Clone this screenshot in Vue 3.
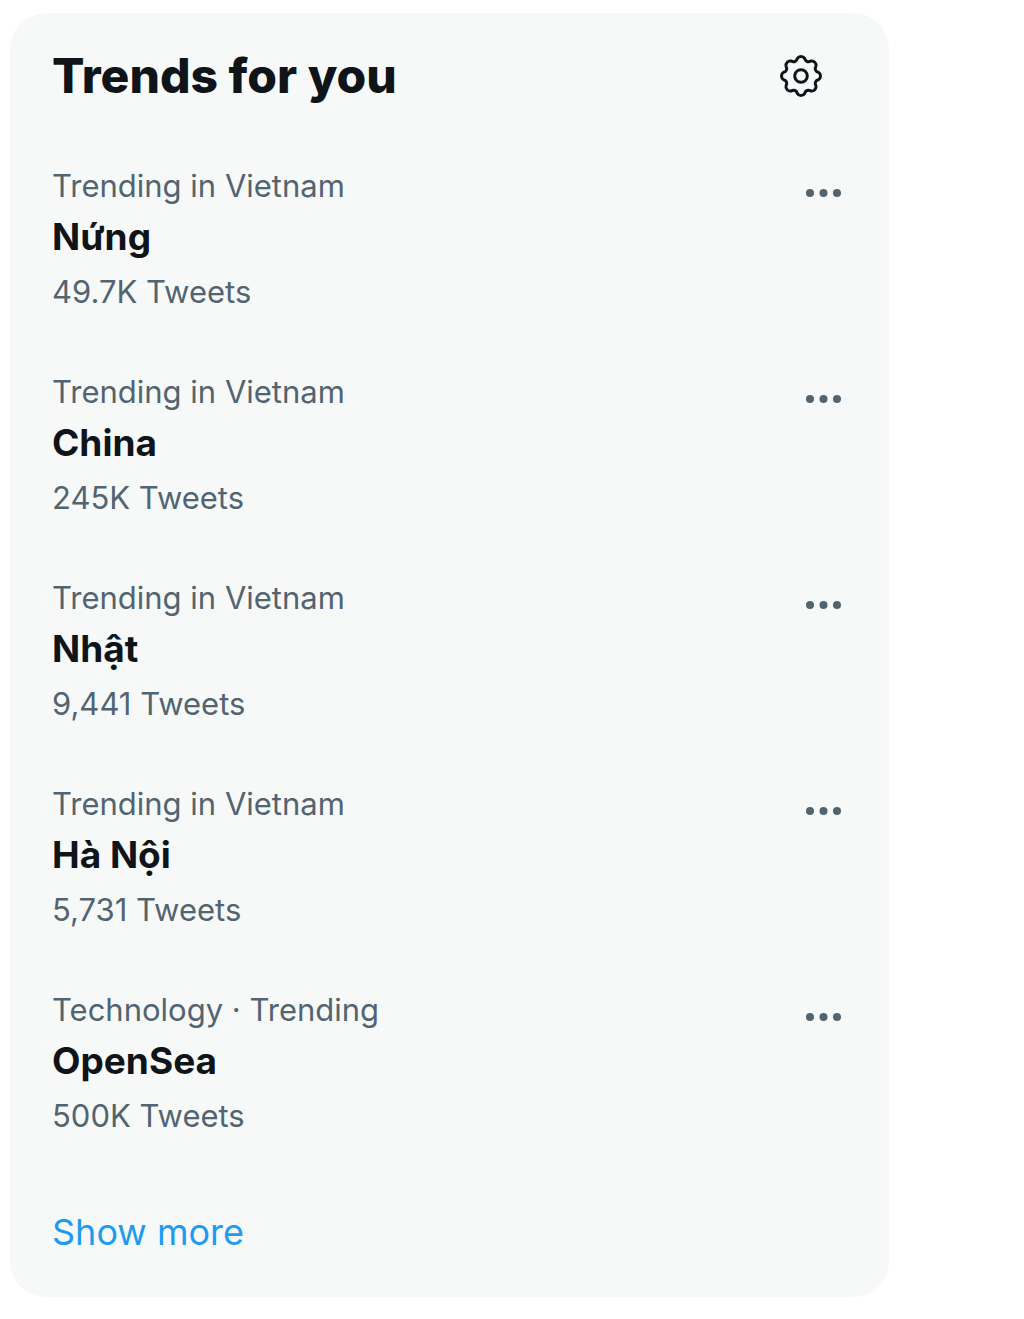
<script setup>
const trends = [
  { context: 'Trending in Vietnam', name: 'Nứng', count: '49.7K Tweets' },
  { context: 'Trending in Vietnam', name: 'China', count: '245K Tweets' },
  { context: 'Trending in Vietnam', name: 'Nhật', count: '9,441 Tweets' },
  { context: 'Trending in Vietnam', name: 'Hà Nội', count: '5,731 Tweets' },
  { context: 'Technology · Trending', name: 'OpenSea', count: '500K Tweets' },
]

// Gear outline: eight rounded teeth joined by rounded valleys
const point = (degrees) => {
  const angle = (degrees * Math.PI) / 180
  return `${(24 + 17.8 * Math.sin(angle)).toFixed(2)} ${(24 - 17.8 * Math.cos(angle)).toFixed(2)}`
}
let gearPath = `M${point(-12)}`
for (let tooth = 0; tooth < 8; tooth++) {
  gearPath += `A4.3 4.3 0 0 1 ${point(tooth * 45 + 12)}A3.8 3.8 0 0 0 ${point(tooth * 45 + 33)}`
}
gearPath += 'Z'
</script>

<template>
  <section class="card" aria-labelledby="trends-title">
    <header class="header">
      <h1 id="trends-title">Trends for you</h1>
      <button class="icon-button" type="button" aria-label="Settings">
        <svg width="48" height="48" viewBox="0 0 48 48" fill="none" stroke="#0f1419" stroke-width="3" stroke-linejoin="round" aria-hidden="true">
          <path :d="gearPath" />
          <circle cx="24" cy="24" r="6.3" />
        </svg>
      </button>
    </header>
    <ul class="list">
      <li v-for="trend in trends" :key="trend.name" class="trend">
        <div class="details">
          <p class="meta">{{ trend.context }}</p>
          <h2>{{ trend.name }}</h2>
          <p class="meta">{{ trend.count }}</p>
        </div>
        <button class="icon-button more" type="button" :aria-label="'More about ' + trend.name">
          <svg width="36" height="12" viewBox="0 0 36 12" fill="#536471" aria-hidden="true">
            <circle cx="4" cy="6" r="4" />
            <circle cx="17.5" cy="6" r="4" />
            <circle cx="31" cy="6" r="4" />
          </svg>
        </button>
      </li>
    </ul>
    <a class="show-more" href="#">Show more</a>
  </section>
</template>

<style>
body {
  margin: 0;
  background: #fff;
}
</style>

<style scoped>
.card {
  box-sizing: border-box;
  margin: 13px 135px 20px 10px;
  padding: 32px 42px 40px;
  border-radius: 36px;
  background: #f7f9f9;
  color: #0f1419;
  font-family: Inter, "Liberation Sans", sans-serif;
}
.header {
  display: flex;
  align-items: center;
  justify-content: space-between;
  padding-right: 22px;
}
h1, h2, p {
  margin: 0;
}
h1 {
  font-size: 48px;
  line-height: 62px;
  font-weight: 800;
}
.icon-button {
  display: flex;
  padding: 0;
  border: 0;
  background: none;
  cursor: pointer;
}
.list {
  display: flex;
  flex-direction: column;
  gap: 50px;
  margin: 54px 0 0;
  padding: 0;
  list-style: none;
}
.trend {
  display: flex;
  justify-content: space-between;
  align-items: flex-start;
}
.meta {
  color: #536471;
  font-size: 31px;
  line-height: 50px;
}
h2 {
  margin-bottom: 4px;
  font-size: 37px;
  line-height: 52px;
  font-weight: 700;
}
.more {
  margin: 26px 5px 0 0;
}
.show-more {
  display: inline-block;
  margin-top: 66px;
  color: #1d9bf0;
  font-size: 36px;
  line-height: 50px;
  text-decoration: none;
}
</style>
